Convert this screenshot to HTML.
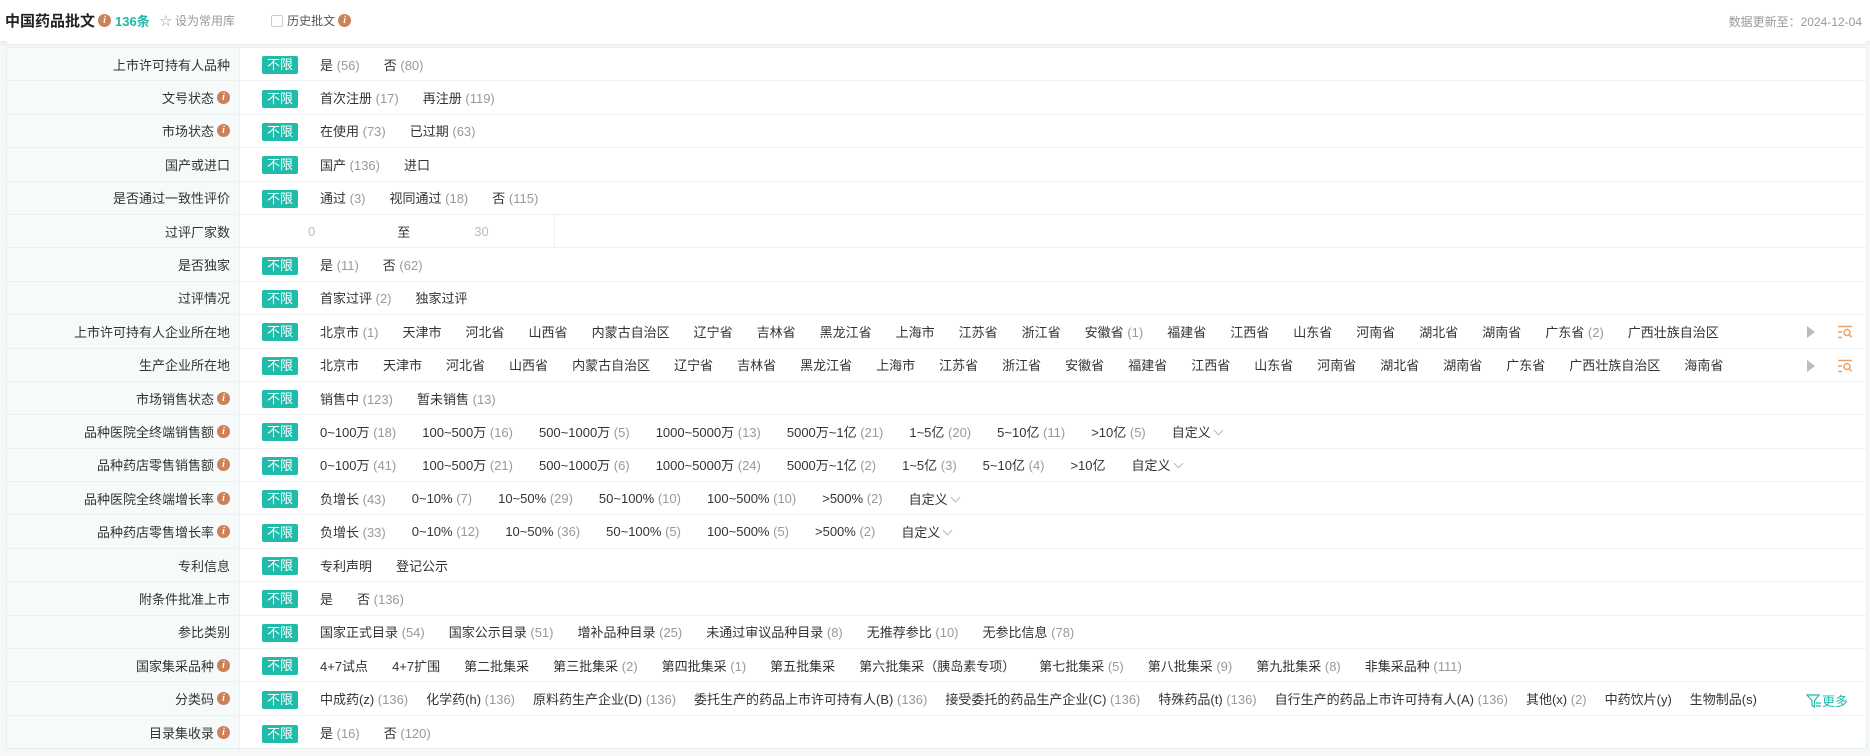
<!DOCTYPE html>
<html><head><meta charset="utf-8"><style>
*{box-sizing:border-box;margin:0;padding:0}
body{width:1870px;height:756px;overflow:hidden;background:#f5f7f8;font-family:"Liberation Sans","Noto Sans CJK SC",sans-serif;font-size:13px;color:#333;position:relative}
.hdr{position:absolute;left:0;top:0;width:1870px;height:41px;background:#fff;box-shadow:0 2px 4px rgba(0,0,0,.06);display:flex;align-items:center;padding-left:5px}
.title{font-size:15px;font-weight:bold;color:#222}
.ic{display:inline-block;width:13px;height:13px;border-radius:50%;background:#cd8157;color:#fff;font-size:10px;font-weight:bold;font-style:italic;text-align:center;line-height:13px;font-family:"Liberation Serif",serif;vertical-align:-2px;margin-left:3px}
.cnt{color:#1fb9a8;font-weight:bold;margin-left:4px;font-size:13px}
.fav{color:#999;margin-left:10px;font-size:12px}
.chk{display:inline-block;width:12px;height:12px;border:1px solid #ccc;border-radius:2px;margin-left:36px;vertical-align:-2px;background:#fff}
.hist{margin-left:4px;color:#555;font-size:12px}
.date{position:absolute;right:8px;top:13px;color:#999;font-size:12px}
.prev{position:absolute;left:6px;top:41px;width:1861px;height:4px;background:#fff;border:1px solid #e6eeee;border-top:none}
.box{position:absolute;left:6px;top:47px;width:1861px;height:702px;background:#fff;border:1px solid #e6eeee;border-radius:3px;overflow:hidden}
.row{height:33.4px;display:flex;align-items:center;border-bottom:1px solid #edf1f1;position:relative}
.row:last-child{border-bottom:none}
.lab{width:233px;height:100%;background:#f7fafb;border-right:1px solid #edf1f1;display:flex;align-items:center;justify-content:flex-end;padding-right:9px;color:#333;white-space:nowrap}
.opts{display:flex;align-items:center;padding-left:22px;white-space:nowrap}
.bx{background:#1fbcaa;color:#fff;width:36px;height:18px;line-height:18px;text-align:center;border-radius:2px;margin-right:22px;margin-top:2px}
.o{margin-right:24px}
.w .o{margin-right:26px}
.n .o{margin-right:18px}
.o i{font-style:normal;color:#999}
.dd{color:#333}
.dd:after{content:"";display:inline-block;width:6px;height:6px;border-right:1px solid #bbb;border-bottom:1px solid #bbb;transform:rotate(45deg);margin-left:4px;vertical-align:3px}
.tri{position:absolute;left:1800px;top:11px;width:0;height:0;border-left:8px solid #bbb;border-top:6px solid transparent;border-bottom:6px solid transparent}
.srch{position:absolute;left:1830px;top:10px}
.more{position:absolute;left:1799px;top:9px;color:#1fb9a8;font-size:13px}
</style></head><body>
<div class="hdr"><span class="title">中国药品批文</span><span class="ic">i</span><span class="cnt">136条</span><span class="fav">☆ 设为常用库</span><span class="chk"></span><span class="hist">历史批文</span><span class="ic">i</span></div>
<div class="date">数据更新至：2024-12-04</div>
<div class="prev"></div>
<div class="box">
<div class="row"><div class="lab">上市许可持有人品种</div><div class="opts"><span class="bx">不限</span><span class="o">是 <i>(56)</i></span><span class="o">否 <i>(80)</i></span></div></div>
<div class="row"><div class="lab">文号状态<span class="ic">i</span></div><div class="opts"><span class="bx">不限</span><span class="o">首次注册 <i>(17)</i></span><span class="o">再注册 <i>(119)</i></span></div></div>
<div class="row"><div class="lab">市场状态<span class="ic">i</span></div><div class="opts"><span class="bx">不限</span><span class="o">在使用 <i>(73)</i></span><span class="o">已过期 <i>(63)</i></span></div></div>
<div class="row"><div class="lab">国产或进口</div><div class="opts"><span class="bx">不限</span><span class="o">国产 <i>(136)</i></span><span class="o">进口</span></div></div>
<div class="row"><div class="lab">是否通过一致性评价</div><div class="opts"><span class="bx">不限</span><span class="o">通过 <i>(3)</i></span><span class="o">视同通过 <i>(18)</i></span><span class="o">否 <i>(115)</i></span></div></div>
<div class="row"><div class="lab">过评厂家数</div><div class="opts" style="padding-left:0;height:100%"><span style="color:#bbb;margin-left:68px">0</span><span style="margin-left:82px">至</span><span style="color:#bbb;margin-left:64px">30</span><span style="border-right:1px solid #edf1f1;height:100%;margin-left:65px"></span></div></div>
<div class="row"><div class="lab">是否独家</div><div class="opts"><span class="bx">不限</span><span class="o">是 <i>(11)</i></span><span class="o">否 <i>(62)</i></span></div></div>
<div class="row"><div class="lab">过评情况</div><div class="opts"><span class="bx">不限</span><span class="o">首家过评 <i>(2)</i></span><span class="o">独家过评</span></div></div>
<div class="row"><div class="lab">上市许可持有人企业所在地</div><div class="opts"><span class="bx">不限</span><span class="o">北京市 <i>(1)</i></span><span class="o">天津市</span><span class="o">河北省</span><span class="o">山西省</span><span class="o">内蒙古自治区</span><span class="o">辽宁省</span><span class="o">吉林省</span><span class="o">黑龙江省</span><span class="o">上海市</span><span class="o">江苏省</span><span class="o">浙江省</span><span class="o">安徽省 <i>(1)</i></span><span class="o">福建省</span><span class="o">江西省</span><span class="o">山东省</span><span class="o">河南省</span><span class="o">湖北省</span><span class="o">湖南省</span><span class="o">广东省 <i>(2)</i></span><span class="o">广西壮族自治区</span></div><span class="tri"></span><svg class="srch" width="16" height="14" viewBox="0 0 16 14"><g stroke="#f0a060" stroke-width="1.4" fill="none"><path d="M1 1.5h14M1 7h4M1 12.5h4"/><circle cx="10" cy="7.5" r="3"/><path d="M12.2 9.7l2.5 2.5"/></g></svg></div>
<div class="row"><div class="lab">生产企业所在地</div><div class="opts"><span class="bx">不限</span><span class="o">北京市</span><span class="o">天津市</span><span class="o">河北省</span><span class="o">山西省</span><span class="o">内蒙古自治区</span><span class="o">辽宁省</span><span class="o">吉林省</span><span class="o">黑龙江省</span><span class="o">上海市</span><span class="o">江苏省</span><span class="o">浙江省</span><span class="o">安徽省</span><span class="o">福建省</span><span class="o">江西省</span><span class="o">山东省</span><span class="o">河南省</span><span class="o">湖北省</span><span class="o">湖南省</span><span class="o">广东省</span><span class="o">广西壮族自治区</span><span class="o">海南省</span></div><span class="tri"></span><svg class="srch" width="16" height="14" viewBox="0 0 16 14"><g stroke="#f0a060" stroke-width="1.4" fill="none"><path d="M1 1.5h14M1 7h4M1 12.5h4"/><circle cx="10" cy="7.5" r="3"/><path d="M12.2 9.7l2.5 2.5"/></g></svg></div>
<div class="row"><div class="lab">市场销售状态<span class="ic">i</span></div><div class="opts"><span class="bx">不限</span><span class="o">销售中 <i>(123)</i></span><span class="o">暂未销售 <i>(13)</i></span></div></div>
<div class="row"><div class="lab">品种医院全终端销售额<span class="ic">i</span></div><div class="opts w"><span class="bx">不限</span><span class="o">0~100万 <i>(18)</i></span><span class="o">100~500万 <i>(16)</i></span><span class="o">500~1000万 <i>(5)</i></span><span class="o">1000~5000万 <i>(13)</i></span><span class="o">5000万~1亿 <i>(21)</i></span><span class="o">1~5亿 <i>(20)</i></span><span class="o">5~10亿 <i>(11)</i></span><span class="o">&gt;10亿 <i>(5)</i></span><span class="dd">自定义</span></div></div>
<div class="row"><div class="lab">品种药店零售销售额<span class="ic">i</span></div><div class="opts w"><span class="bx">不限</span><span class="o">0~100万 <i>(41)</i></span><span class="o">100~500万 <i>(21)</i></span><span class="o">500~1000万 <i>(6)</i></span><span class="o">1000~5000万 <i>(24)</i></span><span class="o">5000万~1亿 <i>(2)</i></span><span class="o">1~5亿 <i>(3)</i></span><span class="o">5~10亿 <i>(4)</i></span><span class="o">&gt;10亿</span><span class="dd">自定义</span></div></div>
<div class="row"><div class="lab">品种医院全终端增长率<span class="ic">i</span></div><div class="opts w"><span class="bx">不限</span><span class="o">负增长 <i>(43)</i></span><span class="o">0~10% <i>(7)</i></span><span class="o">10~50% <i>(29)</i></span><span class="o">50~100% <i>(10)</i></span><span class="o">100~500% <i>(10)</i></span><span class="o">&gt;500% <i>(2)</i></span><span class="dd">自定义</span></div></div>
<div class="row"><div class="lab">品种药店零售增长率<span class="ic">i</span></div><div class="opts w"><span class="bx">不限</span><span class="o">负增长 <i>(33)</i></span><span class="o">0~10% <i>(12)</i></span><span class="o">10~50% <i>(36)</i></span><span class="o">50~100% <i>(5)</i></span><span class="o">100~500% <i>(5)</i></span><span class="o">&gt;500% <i>(2)</i></span><span class="dd">自定义</span></div></div>
<div class="row"><div class="lab">专利信息</div><div class="opts"><span class="bx">不限</span><span class="o">专利声明</span><span class="o">登记公示</span></div></div>
<div class="row"><div class="lab">附条件批准上市</div><div class="opts"><span class="bx">不限</span><span class="o">是</span><span class="o">否 <i>(136)</i></span></div></div>
<div class="row"><div class="lab">参比类别</div><div class="opts"><span class="bx">不限</span><span class="o">国家正式目录 <i>(54)</i></span><span class="o">国家公示目录 <i>(51)</i></span><span class="o">增补品种目录 <i>(25)</i></span><span class="o">未通过审议品种目录 <i>(8)</i></span><span class="o">无推荐参比 <i>(10)</i></span><span class="o">无参比信息 <i>(78)</i></span></div></div>
<div class="row"><div class="lab">国家集采品种<span class="ic">i</span></div><div class="opts"><span class="bx">不限</span><span class="o">4+7试点</span><span class="o">4+7扩围</span><span class="o">第二批集采</span><span class="o">第三批集采 <i>(2)</i></span><span class="o">第四批集采 <i>(1)</i></span><span class="o">第五批集采</span><span class="o">第六批集采（胰岛素专项）</span><span class="o">第七批集采 <i>(5)</i></span><span class="o">第八批集采 <i>(9)</i></span><span class="o">第九批集采 <i>(8)</i></span><span class="o">非集采品种 <i>(111)</i></span></div></div>
<div class="row"><div class="lab">分类码<span class="ic">i</span></div><div class="opts n"><span class="bx">不限</span><span class="o">中成药(z) <i>(136)</i></span><span class="o">化学药(h) <i>(136)</i></span><span class="o">原料药生产企业(D) <i>(136)</i></span><span class="o">委托生产的药品上市许可持有人(B) <i>(136)</i></span><span class="o">接受委托的药品生产企业(C) <i>(136)</i></span><span class="o">特殊药品(t) <i>(136)</i></span><span class="o">自行生产的药品上市许可持有人(A) <i>(136)</i></span><span class="o">其他(x) <i>(2)</i></span><span class="o">中药饮片(y)</span><span class="o">生物制品(s)</span></div><span class="more"><svg width="16" height="14" viewBox="0 0 16 14" style="vertical-align:-2px"><path d="M1 1h12L8.5 6.5V13L6 11.5V6.5Z M10 9h5M10 12h5" stroke="#1fb9a8" stroke-width="1.2" fill="none"/></svg>更多</span></div>
<div class="row"><div class="lab">目录集收录<span class="ic">i</span></div><div class="opts"><span class="bx">不限</span><span class="o">是 <i>(16)</i></span><span class="o">否 <i>(120)</i></span></div></div>
</div>
</body></html>
